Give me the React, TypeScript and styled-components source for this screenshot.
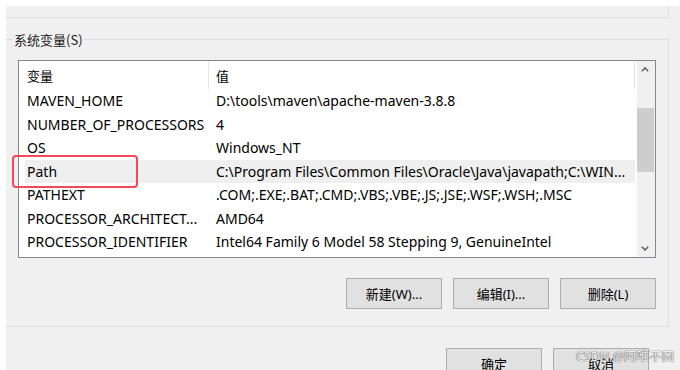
import React from 'react';
import styled, { createGlobalStyle } from 'styled-components';

const GlobalStyle = createGlobalStyle`
  html, body {
    margin: 0;
    padding: 0;
    background: #ffffff;
  }
  body {
    font-family: "Noto Sans", "Noto Sans CJK SC", sans-serif;
    color: #000;
  }
  * {
    box-sizing: border-box;
  }
`;

const StyledPage = styled.div`
  position: relative;
  width: 680px;
  height: 370px;
  padding: 6px 0 0 6px;
  overflow: hidden;
`;

const StyledWindow = styled.div`
  background-color: #f0f0f0;
  width: 674px;
  height: 364px;
`;

const StyledTopEdge = styled.div`
  width: 663px;
  height: 12px;
  border-right: 1px solid #dcdcdc;
  border-bottom: 1px solid #dcdcdc;
`;

const StyledGroup = styled.section`
  margin-top: 21px;
  width: 663px;
  padding: 0 12px 17px 12px;
  border-top: 1px solid #dcdcdc;
  border-right: 1px solid #dcdcdc;
  border-bottom: 1px solid #dcdcdc;
`;

const StyledLegend = styled.div`
  width: fit-content;
  margin: -10px 0 0 -5px;
  padding: 0 1px;
  height: 19px;
  line-height: 19px;
  font-size: 13px;
  font-family: "Noto Sans CJK SC", sans-serif;
  background-color: #f0f0f0;
  color: #1a1a1a;
`;

const StyledList = styled.div`
  display: flex;
  margin-top: 11px;
  width: 638px;
  height: 198px;
  border: 1px solid #828790;
  background-color: #ffffff;
`;

const StyledRows = styled.div`
  flex: 1;
  padding: 0 2px 0 6px;
  overflow: hidden;
`;

const StyledHeader = styled.div`
  display: flex;
  height: 28px;
  align-items: stretch;
  font-family: "Noto Sans CJK SC", sans-serif;
  font-size: 13px;
`;

const StyledHeaderCell = styled.div<{ $width?: number }>`
  display: flex;
  align-items: center;
  padding-left: ${(p) => (p.$width ? '2px' : '7px')};
  ${(p) => (p.$width ? `width: ${p.$width}px;` : 'flex: 1;')}
  border-right: 1px solid #e5e5e5;
`;

const StyledRow = styled.div<{ $selected?: boolean }>`
  display: flex;
  align-items: center;
  height: 23.5px;
  padding-left: 2px;
  font-size: 14px;
  white-space: nowrap;
  background-color: ${(p) => (p.$selected ? '#efefef' : 'transparent')};
`;

const StyledName = styled.div`
  width: 189px;
  flex-shrink: 0;
  overflow: hidden;
`;

const StyledValue = styled.div`
  flex: 1;
  overflow: hidden;
`;

const StyledScrollbar = styled.div`
  width: 18px;
  display: flex;
  flex-direction: column;
  background-color: #f0f0f0;
`;

const StyledArrow = styled.div`
  height: 17px;
  display: flex;
  align-items: center;
  justify-content: center;
  padding-right: 2px;
`;

const StyledTrack = styled.div`
  flex: 1;
  padding-top: 30px;
`;

const StyledThumb = styled.div`
  width: 17px;
  height: 64px;
  background-color: #cdcdcd;
`;

const StyledButtons = styled.div<{ $gapRight?: number }>`
  display: flex;
  justify-content: flex-end;
  gap: 11px;
  padding-right: ${(p) => p.$gapRight ?? 0}px;
`;

const StyledButton = styled.button`
  width: 96px;
  height: 31px;
  padding: 0;
  border: 1px solid #adadad;
  background-color: #e1e1e1;
  color: #000;
  font-family: "Noto Sans", "Noto Sans CJK SC", sans-serif;
  font-size: 13px;
`;

const StyledGroupButtons = styled(StyledButtons)`
  margin-top: 20px;
`;

const StyledDialogButtons = styled(StyledButtons)`
  margin-top: 21px;
`;

const StyledMark = styled.div`
  position: absolute;
  left: 12px;
  top: 155px;
  width: 126px;
  height: 33px;
  border: 2.5px solid #f04a5b;
  border-radius: 4px;
`;

const StyledWatermark = styled.div`
  position: absolute;
  left: 576px;
  top: 346px;
  font-family: "Noto Sans", "Noto Sans CJK SC", sans-serif;
  font-size: 12.5px;
  color: rgba(255, 255, 255, 0.92);
  text-shadow: 0 0 1px #555, 0 0 1px #555;
  white-space: nowrap;
`;

const Chevron = ({ down }: { down?: boolean }) => (
  <svg width="8" height="5" viewBox="0 0 8 5">
    <path
      d={down ? 'M0.8 0.8 L4 4 L7.2 0.8' : 'M0.8 4.2 L4 1 L7.2 4.2'}
      fill="none"
      stroke="#606060"
      strokeWidth="1.6"
    />
  </svg>
);

const rows = [
  { name: 'MAVEN_HOME', value: 'D:\\tools\\maven\\apache-maven-3.8.8' },
  { name: 'NUMBER_OF_PROCESSORS', value: '4' },
  { name: 'OS', value: 'Windows_NT' },
  { name: 'Path', value: 'C:\\Program Files\\Common Files\\Oracle\\Java\\javapath;C:\\WIN...' },
  { name: 'PATHEXT', value: '.COM;.EXE;.BAT;.CMD;.VBS;.VBE;.JS;.JSE;.WSF;.WSH;.MSC' },
  { name: 'PROCESSOR_ARCHITECT...', value: 'AMD64' },
  { name: 'PROCESSOR_IDENTIFIER', value: 'Intel64 Family 6 Model 58 Stepping 9, GenuineIntel' },
];

const App = () => {
  return (
    <>
      <GlobalStyle />
      <StyledPage>
        <StyledWindow>
          <StyledTopEdge />
          <StyledGroup>
            <StyledLegend>系统变量(S)</StyledLegend>
            <StyledList>
              <StyledRows>
                <StyledHeader>
                  <StyledHeaderCell $width={184}>变量</StyledHeaderCell>
                  <StyledHeaderCell>值</StyledHeaderCell>
                </StyledHeader>
                {rows.map((row) => (
                  <StyledRow key={row.name} $selected={row.name === 'Path'}>
                    <StyledName>{row.name}</StyledName>
                    <StyledValue>{row.value}</StyledValue>
                  </StyledRow>
                ))}
              </StyledRows>
              <StyledScrollbar>
                <StyledArrow>
                  <Chevron />
                </StyledArrow>
                <StyledTrack>
                  <StyledThumb />
                </StyledTrack>
                <StyledArrow>
                  <Chevron down />
                </StyledArrow>
              </StyledScrollbar>
            </StyledList>
            <StyledGroupButtons>
              <StyledButton>新建(W)...</StyledButton>
              <StyledButton>编辑(I)...</StyledButton>
              <StyledButton>删除(L)</StyledButton>
            </StyledGroupButtons>
          </StyledGroup>
          <StyledDialogButtons $gapRight={31}>
            <StyledButton>确定</StyledButton>
            <StyledButton>取消</StyledButton>
          </StyledDialogButtons>
        </StyledWindow>
        <StyledMark />
        <StyledWatermark>CSDN @阿唯不困</StyledWatermark>
      </StyledPage>
    </>
  );
};

export default App;
